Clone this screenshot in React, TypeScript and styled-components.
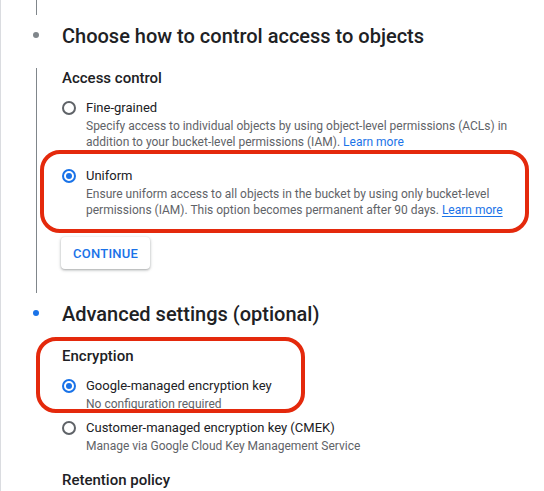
import React from "react";
import styled, { createGlobalStyle } from "styled-components";

const GlobalStyle = createGlobalStyle`
  html, body { margin: 0; padding: 0; background: #ffffff; }
  body { font-family: Roboto, "Noto Sans", Arial, sans-serif; color: #202124; -webkit-font-smoothing: antialiased; }
  * { box-sizing: border-box; }
`;

const Page = styled.div`
  width: 544px;
  height: 491px;
  overflow: hidden;
  border-left: 1px solid #dadce0;
`;

const Rail = styled.div<{ $height: number }>`
  margin-left: 35px;
  width: 1px;
  height: ${(p) => p.$height}px;
  background: #80868b;
`;

const StepHeader = styled.div`
  display: grid;
  grid-template-columns: 61px 1fr;
  height: 53px;
  align-items: start;
`;

const Bullet = styled.span<{ $active?: boolean }>`
  display: block;
  width: 6px;
  height: 6px;
  border-radius: 50%;
  margin: 17px 0 0 32px;
  background: ${(p) => (p.$active ? "#1a73e8" : "#80868b")};
`;

const StepTitle = styled.h2`
  margin: 7px 0 0;
  font-size: 20px;
  line-height: 28px;
  font-weight: 500;
  color: #202124;
  letter-spacing: 0;
`;

const StepBody = styled.div<{ $rail?: boolean; $pb?: number }>`
  margin-left: 35px;
  border-left: 1px solid ${(p) => (p.$rail ? "#80868b" : "transparent")};
  padding-left: 25px;
  padding-bottom: ${(p) => p.$pb ?? 0}px;
`;

const SectionLabel = styled.div<{ $mt?: number }>`
  margin-top: ${(p) => p.$mt ?? 0}px;
  font-size: 15px;
  line-height: 20px;
  font-weight: 500;
  color: #202124;
`;

const Option = styled.div<{ $mt?: number }>`
  display: grid;
  grid-template-columns: 14px 1fr;
  column-gap: 10px;
  margin-top: ${(p) => p.$mt ?? 0}px;
`;

const Radio = styled.span<{ $checked?: boolean }>`
  width: 14px;
  height: 14px;
  margin-top: 3px;
  border-radius: 50%;
  border: 2px solid ${(p) => (p.$checked ? "#1a73e8" : "#5f6368")};
  display: flex;
  align-items: center;
  justify-content: center;
  &::after {
    content: "";
    display: ${(p) => (p.$checked ? "block" : "none")};
    width: 6px;
    height: 6px;
    border-radius: 50%;
    background: #1a73e8;
  }
`;

const OptionText = styled.div`
  max-width: 424px;
`;

const OptionLabel = styled.div`
  font-size: 13px;
  line-height: 20px;
  color: #202124;
`;

const OptionDesc = styled.div`
  font-size: 12px;
  line-height: 16px;
  color: #5f6368;
`;

const Link = styled.a<{ $underline?: boolean }>`
  color: #1a73e8;
  text-decoration: ${(p) => (p.$underline ? "underline" : "none")};
  text-underline-offset: 2px;
  cursor: pointer;
`;

const Highlight = styled.div<{ $t: number; $l: number; $r: number; $b: number }>`
  position: relative;
  &::before {
    content: "";
    position: absolute;
    top: ${(p) => -p.$t}px;
    left: ${(p) => -p.$l}px;
    right: ${(p) => p.$r}px;
    bottom: ${(p) => -p.$b}px;
    border: 4px solid #e4290c;
    border-radius: 20px;
    pointer-events: none;
  }
`;

const ContinueButton = styled.button`
  display: block;
  margin-top: 19px;
  height: 32px;
  padding: 0 12px;
  border: none;
  border-radius: 4px;
  background: #ffffff;
  color: #1a73e8;
  font-family: Roboto, Arial, sans-serif;
  font-size: 13px;
  font-weight: 500;
  letter-spacing: 0.25px;
  text-transform: uppercase;
  box-shadow: 0 1px 2px rgba(60, 64, 67, 0.3), 0 1px 3px 1px rgba(60, 64, 67, 0.15);
  margin-left: -1px;
`;

export default function App() {
  return (
    <>
      <GlobalStyle />
      <Page>
        <Rail $height={15} />
        <StepHeader>
          <Bullet />
          <StepTitle>Choose how to control access to objects</StepTitle>
        </StepHeader>
        <StepBody $rail $pb={24}>
          <SectionLabel>Access control</SectionLabel>
          <Option $mt={10}>
            <Radio />
            <OptionText>
              <OptionLabel>Fine-grained</OptionLabel>
              <OptionDesc>
                Specify access to individual objects by using object-level permissions (ACLs) in
                addition to your bucket-level permissions (IAM). <Link>Learn more</Link>
              </OptionDesc>
            </OptionText>
          </Option>
          <Highlight $t={16} $l={22} $r={15} $b={15}>
            <Option $mt={16}>
              <Radio $checked />
              <OptionText>
                <OptionLabel>Uniform</OptionLabel>
                <OptionDesc>
                  Ensure uniform access to all objects in the bucket by using only bucket-level
                  permissions (IAM). This option becomes permanent after 90 days.{" "}
                  <Link $underline>Learn more</Link>
                </OptionDesc>
              </OptionText>
            </Option>
          </Highlight>
          <ContinueButton>Continue</ContinueButton>
        </StepBody>
        <StepHeader>
          <Bullet $active />
          <StepTitle>Advanced settings (optional)</StepTitle>
        </StepHeader>
        <StepBody>
          <Highlight $t={9} $l={26} $r={239} $b={1}>
            <SectionLabel>Encryption</SectionLabel>
            <Option $mt={10}>
              <Radio $checked />
              <OptionText>
                <OptionLabel>Google-managed encryption key</OptionLabel>
                <OptionDesc>No configuration required</OptionDesc>
              </OptionText>
            </Option>
          </Highlight>
          <Option $mt={6}>
            <Radio />
            <OptionText>
              <OptionLabel>Customer-managed encryption key (CMEK)</OptionLabel>
              <OptionDesc>Manage via Google Cloud Key Management Service</OptionDesc>
            </OptionText>
          </Option>
          <SectionLabel $mt={16}>Retention policy</SectionLabel>
        </StepBody>
      </Page>
    </>
  );
}
